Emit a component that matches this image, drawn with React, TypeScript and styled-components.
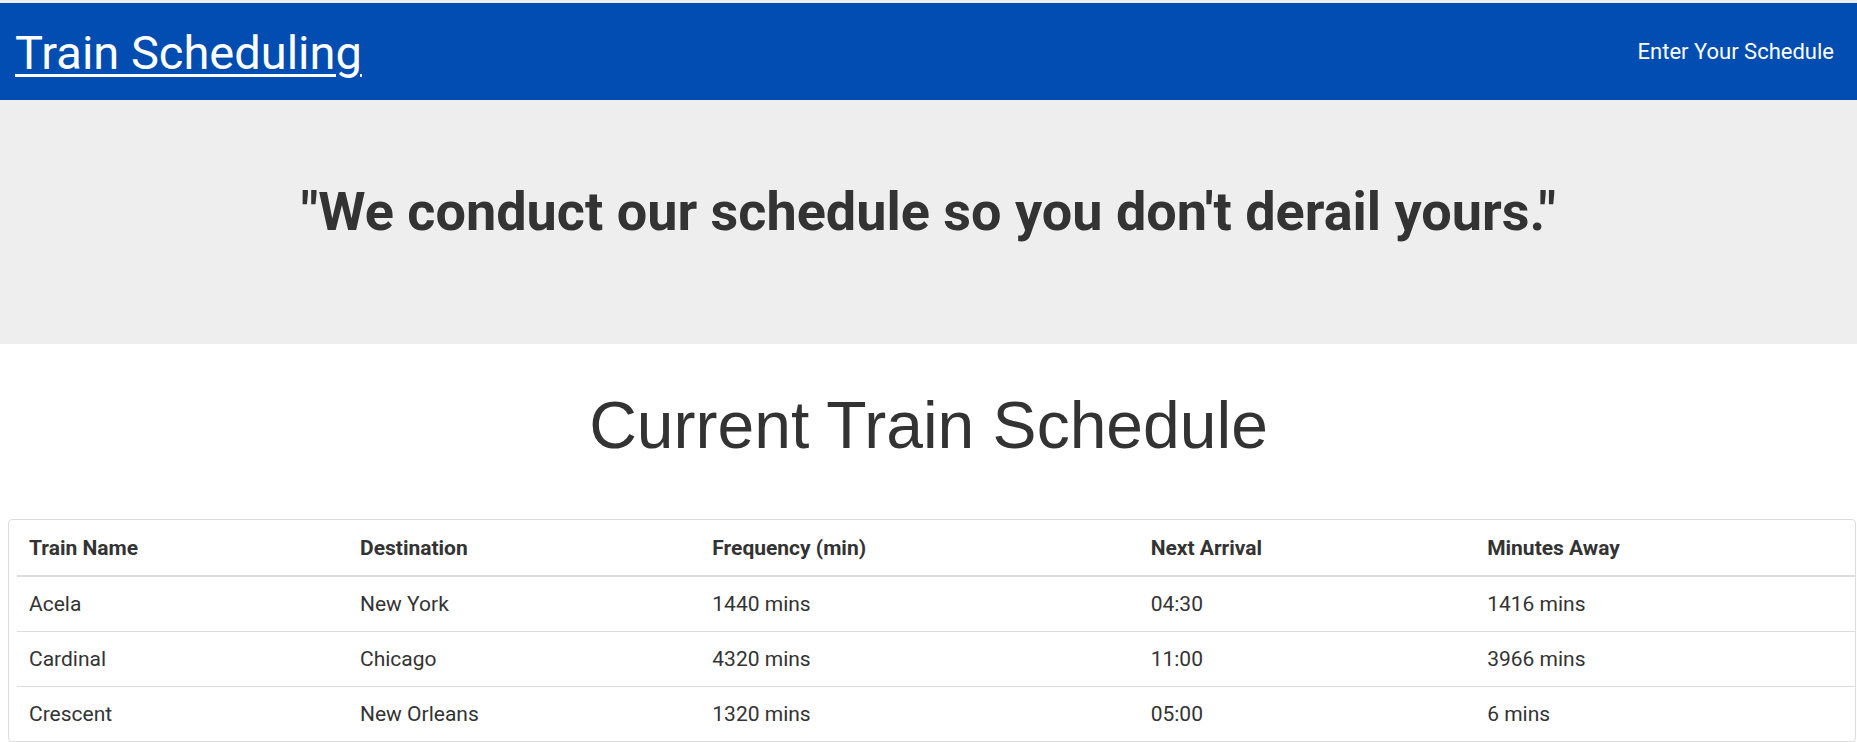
import styled, { createGlobalStyle } from "styled-components";

const GlobalStyle = createGlobalStyle`
  html, body {
    margin: 0;
    padding: 0;
    background: #fff;
  }
  body {
    font-family: Roboto, "Noto Sans", Arial, sans-serif;
    color: #333;
    border-top: 3px solid #eee;
  }
`;

const NavBar = styled.nav`
  height: 97px;
  background-color: #014db1;
  display: flex;
  align-items: center;
  justify-content: space-between;
  padding: 0 23px 0 15px;
`;

const Brand = styled.a`
  color: #fff;
  font-size: 47px;
  line-height: 1;
  text-decoration: underline;
  text-decoration-thickness: 3px;
  text-underline-offset: 5px;
  margin-top: 2px;
`;

const NavLink = styled.a`
  color: #fff;
  font-size: 22px;
  margin-top: -1px;
`;

const Jumbotron = styled.section`
  height: 244px;
  background-color: #eee;
  display: flex;
  align-items: center;
  justify-content: center;
`;

const Quote = styled.h2`
  margin: 0 0 22px;
  font-size: 54px;
  font-weight: 700;
  color: #333;
`;

const Heading = styled.h1`
  margin: 0;
  padding: 48px 0 61px;
  text-align: center;
  font-family: "Liberation Sans", Arial, sans-serif;
  font-weight: 400;
  font-size: 66px;
  line-height: 1;
  color: #333;
`;

const Card = styled.div`
  margin: 0 1px 0 8px;
  border: 1px solid #ddd;
  border-radius: 4px;
  padding-left: 8px;
  box-shadow: 0 1px 1px rgba(0, 0, 0, 0.05);
`;

const Table = styled.table`
  width: 100%;
  border-collapse: collapse;
  font-size: 21px;
`;

const HeadCell = styled.th<{ $w: number }>`
  width: ${p => p.$w}px;
  text-align: left;
  font-weight: 700;
  padding: 17px 12px 16px;
  line-height: 22px;
  border-bottom: 2px solid #ddd;
`;

const Row = styled.tr`
  & + & td {
    border-top: 1px solid #ddd;
  }
`;

const Cell = styled.td`
  padding: 16px 12px;
  line-height: 22px;
`;

interface Train {
  name: string;
  destination: string;
  frequency: number;
  next: string;
  away: number;
}

const trains: Train[] = [
  { name: "Acela", destination: "New York", frequency: 1440, next: "04:30", away: 1416 },
  { name: "Cardinal", destination: "Chicago", frequency: 4320, next: "11:00", away: 3966 },
  { name: "Crescent", destination: "New Orleans", frequency: 1320, next: "05:00", away: 6 },
];

const columns = [
  { label: "Train Name", w: 328 },
  { label: "Destination", w: 349 },
  { label: "Frequency (min)", w: 444 },
  { label: "Next Arrival", w: 336 },
  { label: "Minutes Away", w: 382 },
];

export default function App() {
  return (
    <>
      <GlobalStyle />
      <NavBar>
        <Brand href="#">Train Scheduling</Brand>
        <NavLink>Enter Your Schedule</NavLink>
      </NavBar>
      <Jumbotron>
        <Quote>"We conduct our schedule so you don't derail yours."</Quote>
      </Jumbotron>
      <Heading>Current Train Schedule</Heading>
      <Card>
        <Table>
          <thead>
            <tr>
              {columns.map(c => (
                <HeadCell key={c.label} $w={c.w}>{c.label}</HeadCell>
              ))}
            </tr>
          </thead>
          <tbody>
            {trains.map(t => (
              <Row key={t.name}>
                <Cell>{t.name}</Cell>
                <Cell>{t.destination}</Cell>
                <Cell>{t.frequency} mins</Cell>
                <Cell>{t.next}</Cell>
                <Cell>{t.away} mins</Cell>
              </Row>
            ))}
          </tbody>
        </Table>
      </Card>
    </>
  );
}
